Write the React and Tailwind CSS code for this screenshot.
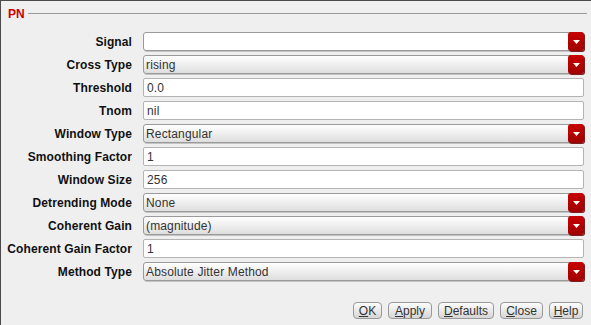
import React from "react";

const rows = [
  { label: "Signal", type: "select", value: "" },
  { label: "Cross Type", type: "select", value: "rising" },
  { label: "Threshold", type: "text", value: "0.0" },
  { label: "Tnom", type: "text", value: "nil" },
  { label: "Window Type", type: "select", value: "Rectangular" },
  { label: "Smoothing Factor", type: "text", value: "1" },
  { label: "Window Size", type: "text", value: "256" },
  { label: "Detrending Mode", type: "select", value: "None" },
  { label: "Coherent Gain", type: "select", value: "(magnitude)" },
  { label: "Coherent Gain Factor", type: "text", value: "1" },
  { label: "Method Type", type: "select", value: "Absolute Jitter Method" },
];

function Select({ value, white }) {
  return (
    <div className={`relative h-[19px] flex items-center rounded-[3px] border border-[#9a9a9a] shadow-[1px_1px_0_#c4c4c4] ${white ? "bg-white" : "bg-gradient-to-b from-[#ffffff] to-[#dedede]"}`}>
      <span className="pl-[2px] text-[12px] leading-none tracking-[0.15px] text-[#333]">{value}</span>
      <div className="absolute right-[-1px] top-[-1px] h-[19px] w-[16px] rounded-[3px] bg-gradient-to-b from-[#c80000] to-[#a00000] shadow-[1px_1px_0_#7a2020] flex items-center justify-center">
        <svg width="7" height="4" viewBox="0 0 7 4"><path d="M0 0h7L3.5 4z" fill="#fff" /></svg>
      </div>
    </div>
  );
}

function Text({ value }) {
  return (
    <div className="h-[19px] flex items-center rounded-[2px] border border-[#b4b4b4] bg-white">
      <span className="pl-[3px] text-[12px] leading-none tracking-[0.15px] text-[#333]">{value}</span>
    </div>
  );
}

function Btn({ w, u, rest }) {
  return (
    <div className={`${w} h-[17px] flex items-center justify-center rounded-[4px] border border-[#999] bg-gradient-to-b from-[#fdfdfd] to-[#d6d6d6] text-[12px] leading-none text-[#333]`}>
      <span><span className="underline underline-offset-1">{u}</span>{rest}</span>
    </div>
  );
}

export default function App() {
  return (
    <div className="w-[591px] h-[325px] bg-[#efefef] border-l border-t border-[#4a4a4a] flex flex-col" style={{ fontFamily: '"Liberation Sans", Arial, sans-serif' }}>
      <div className="flex items-center pl-[7px] pr-[4px] pt-[6px] h-[19px]">
        <span className="text-[12px] font-bold text-[#cc0000] leading-none">PN</span>
        <div className="flex-1 h-px bg-[#9a9a9a] ml-[3px]" />
      </div>
      <div className="grid grid-cols-[131px_441px] gap-x-[11px] gap-y-[4px] mt-[12px]">
        {rows.map((r) => (
          <React.Fragment key={r.label}>
            <div className="h-[19px] flex items-center justify-end text-[12px] font-bold tracking-[0.1px] text-[#111] leading-none">{r.label}</div>
            {r.type === "select" ? <Select value={r.value} white={r.value === ""} /> : <Text value={r.value} />}
          </React.Fragment>
        ))}
      </div>
      <div className="flex justify-end gap-[6px] pr-[8px] mt-[21px]">
        <Btn w="w-[29px]" u="O" rest="K" />
        <Btn w="w-[44px]" u="A" rest="pply" />
        <Btn w="w-[56px]" u="D" rest="efaults" />
        <Btn w="w-[43px]" u="C" rest="lose" />
        <Btn w="w-[34px]" u="H" rest="elp" />
      </div>
    </div>
  );
}
